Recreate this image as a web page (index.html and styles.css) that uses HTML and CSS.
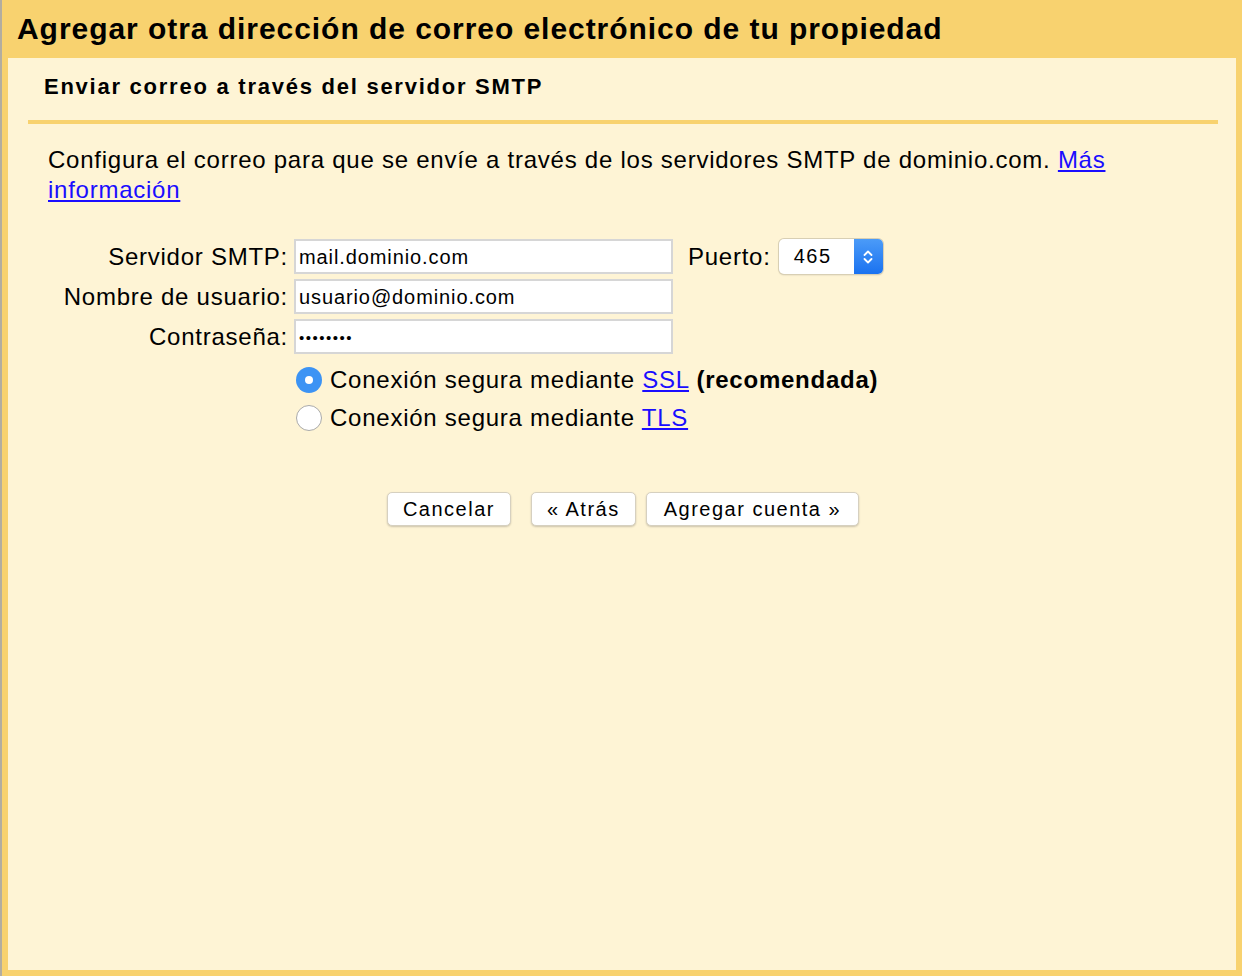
FILE: index.html
```html
<!DOCTYPE html>
<html lang="es">
  <head>
    <meta charset="UTF-8" />
    <title>Agregar otra dirección de correo electrónico</title>
    <link rel="stylesheet" href="styles.css">
  </head>
  <body>
    <div class="dialog">
      <h1 class="dialog-title">Agregar otra dirección de correo electrónico de tu propiedad</h1>

      <div class="panel">
        <div class="section-head">
          <h2>Enviar correo a través del servidor SMTP</h2>
        </div>

        <p class="intro">
          Configura el correo para que se envíe a través de los servidores SMTP de dominio.com.
          <a href="#">Más información</a>
        </p>

        <div class="form">
          <div class="form-row">
            <label for="smtp">Servidor SMTP:</label>
            <input type="text" id="smtp" value="mail.dominio.com" />
            <label for="port" class="port-label">Puerto:</label>
            <div class="select">
              <span class="select-value">465</span>
              <span class="select-arrows">
                <svg width="12" height="18" viewBox="0 0 12 18">
                  <path d="M2.5 7 L6 3.5 L9.5 7 M2.5 11 L6 14.5 L9.5 11" fill="none" stroke="#fff" stroke-width="1.8" stroke-linecap="round" stroke-linejoin="round" />
                </svg>
              </span>
            </div>
          </div>
          <div class="form-row">
            <label for="user">Nombre de usuario:</label>
            <input type="text" id="user" value="usuario@dominio.com" />
          </div>
          <div class="form-row">
            <label for="pass">Contraseña:</label>
            <input type="password" id="pass" class="password" value="12345678" />
          </div>

          <div class="radios">
            <div class="radio-row">
              <span class="radio checked"></span>
              <span>Conexión segura mediante <a href="#">SSL</a> <b>(recomendada)</b></span>
            </div>
            <div class="radio-row">
              <span class="radio"></span>
              <span>Conexión segura mediante <a href="#">TLS</a></span>
            </div>
          </div>
        </div>

        <div class="buttons">
          <button class="btn">Cancelar</button>
          <button class="btn back">« Atrás</button>
          <button class="btn wide">Agregar cuenta »</button>
        </div>
      </div>
    </div>
  </body>
</html>
```

FILE: styles.css
```css
body {
  margin: 0;
  font-family: "Liberation Sans", Arial, sans-serif;
  color: #000;
}

/* Outer orange frame */
.dialog {
  height: 976px;
  box-sizing: border-box;
  background: #f8d26f;
  border-left: 2px solid #b3ada0;
  padding: 0 6px 6px 6px;
  display: flex;
  flex-direction: column;
}

.dialog-title {
  margin: 0;
  height: 58px;
  box-sizing: border-box;
  padding: 12px 0 0 9px;
  font-size: 30px;
  letter-spacing: 0.95px;
  font-weight: bold;
}

.panel {
  flex: 1;
  background: #fef4d5;
  padding: 0 18px 0 20px;
}

.section-head {
  border-bottom: 4px solid #f8d26f;
  padding: 16px 0 0 16px;
  box-sizing: border-box;
  height: 66px;
}

.section-head h2 {
  margin: 0;
  font-size: 22px;
  letter-spacing: 1.75px;
  font-weight: bold;
}

.intro {
  margin: 21px 0 0 20px;
  font-size: 24px;
  letter-spacing: 0.75px;
  line-height: 30px;
}

a {
  color: #1a0dff;
}

/* Form rows */
.form {
  margin-top: 34px;
}

.form-row {
  display: flex;
  align-items: center;
  height: 35px;
  margin-bottom: 5px;
  font-size: 24px;
  letter-spacing: 0.75px;
}

.form-row label {
  width: 240px;
  margin-left: 20px;
  text-align: right;
}

.form-row input {
  margin-left: 6px;
  width: 379px;
  height: 35px;
  box-sizing: border-box;
  border: 2px solid #d6d6d6;
  background: #fff;
  padding: 2px 3px 0;
  font-family: "Liberation Sans", Arial, sans-serif;
  font-size: 20px;
  letter-spacing: 0.9px;
}

.form-row input.password {
  font-size: 15px;
  letter-spacing: 1.5px;
}

.form-row .port-label {
  width: auto;
  margin-left: 15px;
}

.select {
  margin-left: 8px;
  width: 104px;
  height: 35px;
  box-sizing: border-box;
  border-radius: 5px;
  background: #fff;
  box-shadow: 0 0 0 1px #d8cfb4, 0 1px 2px rgba(0, 0, 0, 0.2);
  display: flex;
  overflow: hidden;
}

.select-value {
  flex: 1;
  padding-left: 15px;
  font-size: 20px;
  letter-spacing: 1.5px;
  line-height: 35px;
}

.select-arrows {
  width: 29px;
  background: linear-gradient(#4b9bf8, #1a72f0);
  display: flex;
  align-items: center;
  justify-content: center;
}

/* Radio buttons */
.radios {
  margin: 7px 0 0 268px;
}

.radio-row {
  display: flex;
  align-items: center;
  height: 38px;
  font-size: 24px;
  letter-spacing: 0.75px;
}

.radio {
  width: 26px;
  height: 26px;
  box-sizing: border-box;
  border-radius: 50%;
  border: 1px solid #aaa;
  background: #fff;
  margin-right: 8px;
  position: relative;
}

.radio.checked {
  border: none;
  background: #3c93f4;
}

.radio.checked::after {
  content: "";
  position: absolute;
  left: 9px;
  top: 9px;
  width: 8px;
  height: 8px;
  border-radius: 50%;
  background: #fff;
}

/* Bottom buttons */
.buttons {
  margin-top: 55px;
  display: flex;
  justify-content: center;
  gap: 10px;
}

.btn {
  height: 34px;
  padding: 0 15px;
  background: #fff;
  border: 1px solid #d6d0c0;
  border-radius: 5px;
  box-shadow: 0 1px 2px rgba(0, 0, 0, 0.2);
  font-family: "Liberation Sans", Arial, sans-serif;
  font-size: 20px;
  letter-spacing: 1.5px;
  color: #000;
}

.btn.back {
  margin-left: 10px;
}

.btn.wide {
  padding: 0 17px;
}
```
